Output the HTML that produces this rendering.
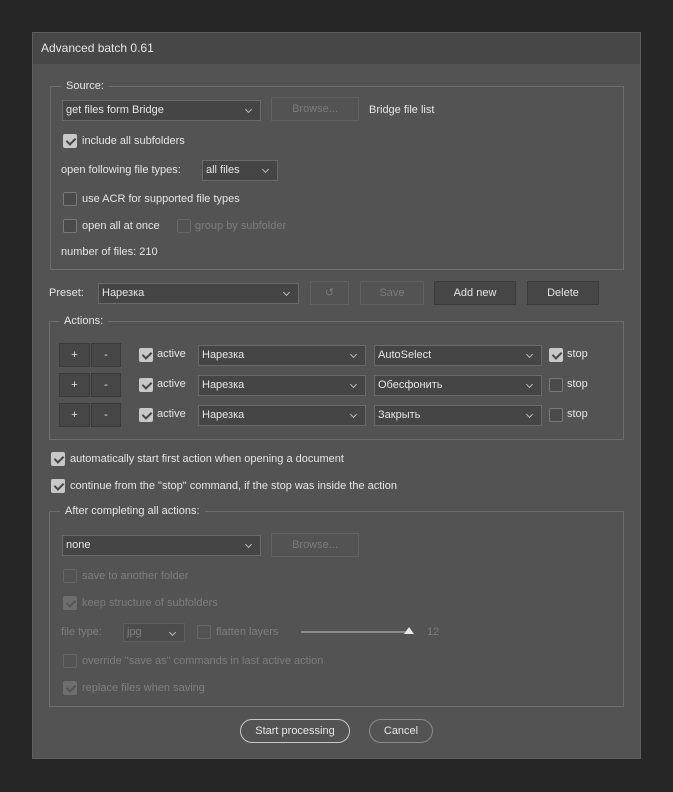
<!DOCTYPE html><html><head><meta charset="utf-8"><style>
*{box-sizing:border-box;margin:0;padding:0}
body{width:673px;height:792px;background:#262626;font-family:"Liberation Sans",sans-serif;font-size:11px;color:#e6e6e6;position:relative;overflow:hidden}
.a{position:absolute}
#dlg{left:32px;top:32px;width:609px;height:727px;background:#535353;border:1px solid #5e5e5e}
#tb{left:32px;top:32px;width:609px;height:32px;background:#474747;border:1px solid #5e5e5e;border-bottom:none}
.t{position:absolute;line-height:14px;white-space:nowrap}
.panel{position:absolute;border:1px solid #6e6e6e}
.lbl{position:absolute;background:#535353;padding:0 5px;line-height:14px;top:-8px}
.dd{position:absolute;background:#454545;border:1px solid #6a6a6a;height:21px;line-height:19px;padding-left:3px;white-space:nowrap}
.dd:after{content:"";position:absolute;right:9px;top:6px;width:4px;height:4px;border-right:1px solid #bbb;border-bottom:1px solid #bbb;transform:rotate(45deg)}
.btn{position:absolute;background:#535353;border:1px solid #444;height:24px;line-height:22px;text-align:center;color:#e6e6e6}
.btn.en{background:#464646;border:1px solid #3a3a3a}
.btn.dis{color:#7c7c7c;background:#535353;border:1px solid #616161}
.cb{position:absolute;width:14px;height:14px;border:1px solid #7a7a7a;border-radius:2px;background:#4a4a4a}
.cb.on{background:#c8c8c8;border-color:#c8c8c8}
.cb.on:after{content:"";position:absolute;left:4px;top:1px;width:4px;height:7px;border-right:2px solid #474747;border-bottom:2px solid #474747;transform:rotate(45deg)}
.cb.d{border-color:#666;background:#535353}
.cb.don{background:#6e6e6e;border-color:#6e6e6e}
.cb.don:after{content:"";position:absolute;left:4px;top:1px;width:4px;height:7px;border-right:2px solid #555;border-bottom:2px solid #555;transform:rotate(45deg)}
.g{color:#7e7e7e}
.pill{position:absolute;height:24px;border-radius:12px;text-align:center;line-height:22px;border:1px solid #c8c8c8}
</style></head><body>
<div id="dlg" class="a"></div>
<div id="tb" class="a"></div>
<div class="t" style="left:41px;top:41px;font-size:12px">Advanced batch 0.61</div>

<div class="panel" style="left:50px;top:86px;width:574px;height:184px"><div class="lbl" style="left:10px">Source:</div></div>
<div class="dd" style="left:62px;top:100px;width:199px">get files form Bridge</div>
<div class="btn dis" style="left:271px;top:97px;width:88px">Browse...</div>
<div class="t" style="left:369px;top:103px">Bridge file list</div>
<div class="cb on" style="left:63px;top:134px"></div><div class="t" style="left:82px;top:134px">include all subfolders</div>
<div class="t" style="left:61px;top:163px">open following file types:</div>
<div class="dd" style="left:202px;top:160px;width:76px">all files</div>
<div class="cb" style="left:63px;top:192px"></div><div class="t" style="left:82px;top:192px">use ACR for supported file types</div>
<div class="cb" style="left:63px;top:219px"></div><div class="t" style="left:82px;top:219px">open all at once</div>
<div class="cb d" style="left:177px;top:219px"></div><div class="t g" style="left:195px;top:219px">group by subfolder</div>
<div class="t" style="left:61px;top:245px">number of files: 210</div>

<div class="t" style="left:49px;top:286px">Preset:</div>
<div class="dd" style="left:98px;top:283px;width:201px">Нарезка</div>
<div class="btn dis" style="left:310px;top:281px;width:39px">↺</div>
<div class="btn dis" style="left:360px;top:281px;width:64px">Save</div>
<div class="btn en" style="left:434px;top:281px;width:82px">Add new</div>
<div class="btn en" style="left:527px;top:281px;width:72px">Delete</div>

<div class="panel" style="left:49px;top:321px;width:575px;height:119px"><div class="lbl" style="left:9px">Actions:</div></div>

<div class="btn en" style="left:59px;top:343px;width:31px">+</div><div class="btn en" style="left:91px;top:343px;width:30px">-</div>
<div class="cb on" style="left:139px;top:348px"></div><div class="t" style="left:157px;top:347px">active</div>
<div class="dd" style="left:198px;top:345px;width:168px">Нарезка</div><div class="dd" style="left:374px;top:345px;width:168px">AutoSelect</div>
<div class="cb on" style="left:549px;top:348px"></div><div class="t" style="left:567px;top:347px">stop</div>

<div class="btn en" style="left:59px;top:373px;width:31px">+</div><div class="btn en" style="left:91px;top:373px;width:30px">-</div>
<div class="cb on" style="left:139px;top:378px"></div><div class="t" style="left:157px;top:377px">active</div>
<div class="dd" style="left:198px;top:375px;width:168px">Нарезка</div><div class="dd" style="left:374px;top:375px;width:168px">Обесфонить</div>
<div class="cb" style="left:549px;top:378px"></div><div class="t" style="left:567px;top:377px">stop</div>

<div class="btn en" style="left:59px;top:403px;width:31px">+</div><div class="btn en" style="left:91px;top:403px;width:30px">-</div>
<div class="cb on" style="left:139px;top:408px"></div><div class="t" style="left:157px;top:407px">active</div>
<div class="dd" style="left:198px;top:405px;width:168px">Нарезка</div><div class="dd" style="left:374px;top:405px;width:168px">Закрыть</div>
<div class="cb" style="left:549px;top:408px"></div><div class="t" style="left:567px;top:407px">stop</div>

<div class="cb on" style="left:51px;top:452px"></div><div class="t" style="left:70px;top:452px">automatically start first action when opening a document</div>
<div class="cb on" style="left:51px;top:479px"></div><div class="t" style="left:70px;top:479px">continue from the "stop" command, if the stop was inside the action</div>

<div class="panel" style="left:49px;top:511px;width:575px;height:196px"><div class="lbl" style="left:10px">After completing all actions:</div></div>
<div class="dd" style="left:62px;top:535px;width:199px">none</div>
<div class="btn dis" style="left:271px;top:533px;width:88px">Browse...</div>
<div class="cb d" style="left:63px;top:569px"></div><div class="t g" style="left:82px;top:569px">save to another folder</div>
<div class="cb don" style="left:63px;top:596px"></div><div class="t g" style="left:82px;top:596px">keep structure of subfolders</div>
<div class="t g" style="left:61px;top:625px">file type:</div>
<div class="dd g" style="left:123px;top:623px;width:62px;height:19px;line-height:17px;background:#4c4c4c;border-color:#5e5e5e">jpg</div>
<div class="cb d" style="left:197px;top:625px"></div><div class="t g" style="left:216px;top:625px">flatten layers</div>
<div class="a" style="left:301px;top:631px;width:110px;height:2px;background:#8a8a8a"></div>
<div class="a" style="left:404px;top:627px;width:0;height:0;border-left:5px solid transparent;border-right:5px solid transparent;border-bottom:7px solid #e8e8e8"></div>
<div class="t g" style="left:427px;top:625px">12</div>
<div class="cb d" style="left:63px;top:654px"></div><div class="t g" style="left:82px;top:654px">override "save as" commands in last active action</div>
<div class="cb don" style="left:63px;top:681px"></div><div class="t g" style="left:82px;top:681px">replace files when saving</div>

<div class="pill" style="left:240px;top:719px;width:110px">Start processing</div>
<div class="pill" style="left:369px;top:719px;width:64px;border-color:#8a8a8a">Cancel</div>
</body></html>
